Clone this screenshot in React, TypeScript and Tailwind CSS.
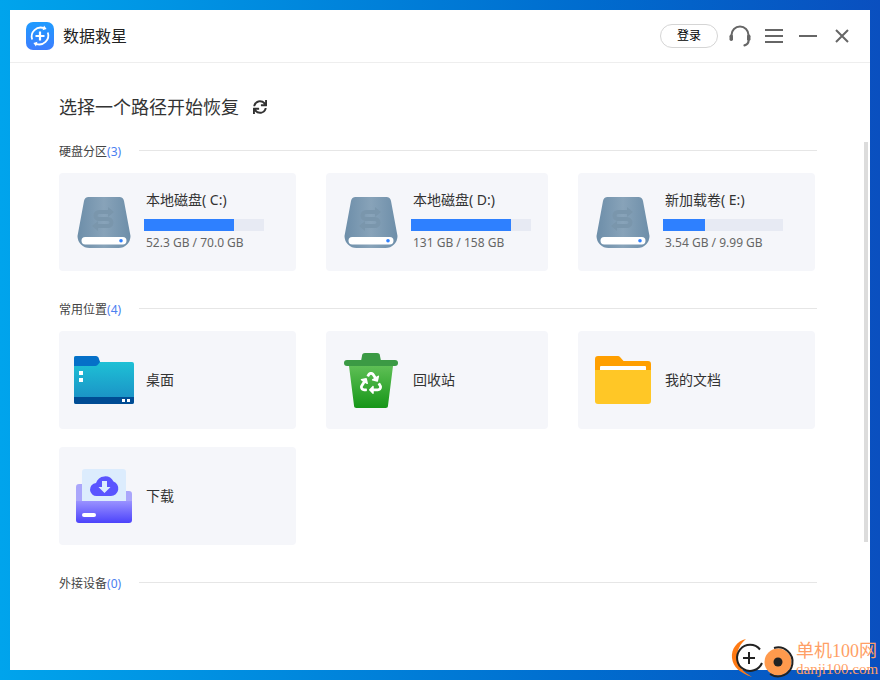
import React from "react";
import { FaRecycle, FaSync } from "react-icons/fa";

const cjk = { fontFamily: '"Noto Sans", "Noto Sans CJK SC", "Liberation Sans", sans-serif' };

function LogoIcon() {
  return (
    <svg width="28" height="28" viewBox="0 0 28 28">
      <defs>
        <linearGradient id="logo" x1="0" y1="0" x2="0" y2="1">
          <stop offset="0" stopColor="#1f9cff" />
          <stop offset="1" stopColor="#3d7dff" />
        </linearGradient>
      </defs>
      <rect width="28" height="28" rx="7" fill="url(#logo)" />
      <path d="M6.200 17.500A9 9 0 0 1 18 6.200" fill="none" stroke="#fff" strokeWidth="1.800" />
      <path d="M21.800 10.500A9 9 0 0 1 10 21.800" fill="none" stroke="#fff" strokeWidth="1.800" />
      <path d="M18 3.600l2.600 3.400-4 1.200z M10 24.400L7.400 21l4-1.200z" fill="#fff" />
      <path d="M14 9.500v9M9.500 14h9" stroke="#fff" strokeWidth="2.200" />
    </svg>
  );
}

function HeadsetIcon() {
  return (
    <svg width="24" height="24" viewBox="0 0 24 24" fill="none">
      <path d="M3.500 14V11a8.500 8.500 0 0 1 17 0v3" stroke="#666" strokeWidth="2" />
      <rect x="1.500" y="10.500" width="3.500" height="6.500" rx="1.700" fill="#666" />
      <rect x="19" y="10.500" width="3.500" height="6.500" rx="1.700" fill="#666" />
      <path d="M20.500 17c0 2.500-2 3.800-4 4.400" stroke="#666" strokeWidth="2.200" strokeLinecap="round" />
    </svg>
  );
}

function DiskIcon() {
  return (
    <svg width="54" height="52" viewBox="0 0 54 52">
      <defs>
        <linearGradient id="disk" x1="0" y1="0" x2="1" y2="0">
          <stop offset="0" stopColor="#6d8ea9" />
          <stop offset="0.5" stopColor="#88a3b9" />
          <stop offset="1" stopColor="#6d8ea9" />
        </linearGradient>
      </defs>
      <path d="M12 0h30a5 5 0 0 1 5 4l6.500 35a12 12 0 0 1-12 12H12.500a12 12 0 0 1-12-12L7 4a5 5 0 0 1 5-4z" fill="url(#disk)" />
      <rect x="4.500" y="40" width="45" height="7.500" rx="3.700" fill="#fff" />
      <circle cx="44" cy="43.700" r="1.800" fill="#2f80ff" />
      <path d="M33 15H22a3.500 3.500 0 0 0 0 7h9a3.500 3.500 0 0 1 0 7H19" fill="none" stroke="#7a96ac" strokeWidth="4" />
      <path d="M31 10l6 5-6 5z M21 24l-6 5 6 5z" fill="#7a96ac" />
    </svg>
  );
}

function DesktopIcon() {
  return (
    <svg width="60" height="48" viewBox="0 0 60 48">
      <defs>
        <linearGradient id="desk" x1="0" y1="0" x2="0" y2="1">
          <stop offset="0" stopColor="#1fc8d8" />
          <stop offset="1" stopColor="#1a8cc4" />
        </linearGradient>
      </defs>
      <path d="M2 0h20l4 6h32a2 2 0 0 1 2 2v38a2 2 0 0 1-2 2H2a2 2 0 0 1-2-2V2a2 2 0 0 1 2-2z" fill="url(#desk)" />
      <path d="M2 0h20a3 3 0 0 1 2.500 1.500L26 6 24 8.500a3 3 0 0 1-2.500 1.500H0V2a2 2 0 0 1 2-2z" fill="#0570c8" />
      <rect x="5" y="15" width="4" height="4" fill="#fff" />
      <rect x="5" y="22" width="4" height="4" fill="#fff" />
      <path d="M0 41h60v5a2 2 0 0 1-2 2H2a2 2 0 0 1-2-2z" fill="#004c94" />
      <rect x="48" y="43" width="3" height="3" fill="#fff" />
      <rect x="53" y="43" width="3" height="3" fill="#fff" />
    </svg>
  );
}

function RecycleIcon() {
  return (
    <svg width="54" height="55" viewBox="0 0 54 55">
      <defs>
        <linearGradient id="bin" x1="0" y1="0" x2="0" y2="1">
          <stop offset="0" stopColor="#5ebf55" />
          <stop offset="1" stopColor="#169618" />
        </linearGradient>
      </defs>
      <path d="M17 8l1-5a3 3 0 0 1 3-3h12a3 3 0 0 1 3 3l1 5z" fill="#3b9a44" />
      <rect x="0" y="7" width="54" height="6" rx="3" fill="#3b9a44" />
      <path d="M5 13h44l-5 39.500a2.500 2.500 0 0 1-2.500 2.500h-29a2.500 2.500 0 0 1-2.500-2.500z" fill="url(#bin)" />
      <FaRecycle x={16} y={19} size={22} color="#fff" />
    </svg>
  );
}

function DocumentsIcon() {
  return (
    <svg width="56" height="48" viewBox="0 0 56 48">
      <path d="M3 0h20a3 3 0 0 1 2 1l3.500 4H53a3 3 0 0 1 3 3v12H0V3a3 3 0 0 1 3-3z" fill="#ff9f00" />
      <rect x="5" y="10" width="46" height="8" rx="1" fill="#fff" />
      <path d="M0 14h56v31a3 3 0 0 1-3 3H3a3 3 0 0 1-3-3z" fill="#ffc726" />
    </svg>
  );
}

function DownloadIcon() {
  return (
    <svg width="56" height="54" viewBox="0 0 56 54">
      <defs>
        <linearGradient id="tray" x1="0" y1="0" x2="0" y2="1">
          <stop offset="0" stopColor="#9a92ff" />
          <stop offset="1" stopColor="#4c43fb" />
        </linearGradient>
      </defs>
      <path d="M3 15h3v17h44V22h3a3 3 0 0 1 3 3v10H0V18a3 3 0 0 1 3-3z" fill="#aaa6fb" />
      <path d="M0 32h56v19a3 3 0 0 1-3 3H3a3 3 0 0 1-3-3z" fill="url(#tray)" />
      <path d="M9 0h38a3 3 0 0 1 3 3v29H6V3a3 3 0 0 1 3-3z" fill="#dcecfd" />
      <path d="M22 27a6.500 6.500 0 0 1-1-13 9.500 9.500 0 0 1 17.500-1.500A7.500 7.500 0 0 1 36 27z" fill="#5a54ff" transform="translate(-1 0)" />
      <path d="M26 12h5v6h3.500l-6 6-6-6H26z" fill="#dcecfd" />
      <rect x="6" y="44" width="14" height="4" rx="2" fill="#fff" />
    </svg>
  );
}

function Section({ title, count }: { title: string; count: number }) {
  return (
    <div className="flex items-center h-[18px]">
      <span className="text-[12px] leading-[18px] w-[80px] text-[#444] mt-[2px]">
        {title}
        <span className="text-[#4a80f0]">({count})</span>
      </span>
      <div className="h-px w-[678px] bg-[#e6e6e6] mb-[2px]" />
    </div>
  );
}

function DriveCard({ name, used, size, pct }: { name: string; used: string; size: string; pct: number }) {
  return (
    <div className="h-[98px] rounded-[4px] bg-[#f5f6fa] flex items-center pl-[19px]">
      <div className="-ml-px mt-[2px]">
        <DiskIcon />
      </div>
      <div className="ml-[13px] flex flex-col mb-[3px]">
        <span className="text-[14px] leading-[18px] pl-[2px] text-[#333]">{name}</span>
        <div className="w-[120px] h-[12px] bg-[#e7eaf3] mt-[10px]">
          <div className="h-full bg-[#2e80ff]" style={{ width: `${pct}%` }} />
        </div>
        <span className="text-[12px] leading-[16px] pl-[2px] mt-[4px] text-[#666]">
          {used} / {size}
        </span>
      </div>
    </div>
  );
}

function PlaceCard({ name, pr, icon }: { name: string; pr: string; icon: React.ReactNode }) {
  return (
    <div className="h-[98px] rounded-[4px] bg-[#f5f6fa] flex items-center">
      <div className={`w-[87px] flex justify-end shrink-0 ${pr}`}>{icon}</div>
      <span className="text-[14px] text-[#333] mb-[2px]">{name}</span>
    </div>
  );
}

export default function App() {
  return (
    <div
      className="relative w-[880px] h-[680px] overflow-hidden p-[10px] bg-gradient-to-r from-[#00a4ec] to-[#0a4fbf]"
      style={cjk}
    >
      <div className="relative w-[860px] h-[660px] bg-white flex flex-col">
        <header className="h-[53px] shrink-0 border-b border-[#eeeeee] flex items-center pl-[16px] pr-[20px]">
          <LogoIcon />
          <span className="ml-[9px] text-[16px] text-[#222]">数据救星</span>
          <div className="ml-auto flex items-center">
            <button className="w-[58px] h-[24px] rounded-full border border-[#d5d5d5] text-[12px] text-black flex items-center justify-center">
              登录
            </button>
            <div className="ml-[10px]">
              <HeadsetIcon />
            </div>
            <div className="ml-[13px] w-[18px] flex flex-col gap-[4px]">
              <div className="h-[2px] bg-[#666]" />
              <div className="h-[2px] bg-[#666]" />
              <div className="h-[2px] bg-[#666]" />
            </div>
            <div className="ml-[16px] w-[18px] h-[2px] bg-[#666]" />
            <svg className="ml-[17px]" width="16" height="16" viewBox="0 0 16 16">
              <path d="M2 2l12 12M14 2L2 14" stroke="#666" strokeWidth="2" />
            </svg>
          </div>
        </header>

        <main className="flex-1 pl-[49px] pt-[31px]">
          <div className="flex items-center h-[26px]">
            <h1 className="text-[18px] leading-[24px] font-normal text-[#333]">选择一个路径开始恢复</h1>
            <FaSync className="ml-[14px] text-[#333] mb-[1px]" size={14} />
          </div>

          <div className="mt-[22px]">
            <Section title="硬盘分区" count={3} />
          </div>
          <div className="mt-[13px] grid grid-cols-[237px_222px_237px] gap-x-[30px]">
            <DriveCard name="本地磁盘( C:)" used="52.3 GB" size="70.0 GB" pct={75} />
            <DriveCard name="本地磁盘( D:)" used="131 GB" size="158 GB" pct={83} />
            <DriveCard name="新加载卷( E:)" used="3.54 GB" size="9.99 GB" pct={35} />
          </div>

          <div className="mt-[29px]">
            <Section title="常用位置" count={4} />
          </div>
          <div className="mt-[13px] grid grid-cols-[237px_222px_237px] gap-x-[30px] gap-y-[18px]">
            <PlaceCard name="桌面" pr="pr-[12px]" icon={<DesktopIcon />} />
            <PlaceCard name="回收站" pr="pr-[15px]" icon={<RecycleIcon />} />
            <PlaceCard name="我的文档" pr="pr-[14px]" icon={<DocumentsIcon />} />
            <PlaceCard name="下载" pr="pr-[14px]" icon={<DownloadIcon />} />
          </div>

          <div className="mt-[29px]">
            <Section title="外接设备" count={0} />
          </div>
        </main>

        <div className="absolute right-[2px] top-[132px] w-[4px] h-[400px] bg-[#dcdcdc]" />
      </div>

      <div className="absolute left-[730px] top-[636px] flex items-start">
        <svg width="66" height="44" viewBox="0 0 66 44">
          <path d="M16 3C7 5 1 13 2 22c1 9 8 15 20 19-8-5-15-10-15-19C7 14 10 8 16 3z" fill="#ff7a14" />
          <circle cx="20" cy="22" r="13" fill="#fff" />
          <path d="M30 13.500A13 13 0 1 0 32 27" fill="none" stroke="#222" strokeWidth="2" />
          <path d="M19 16v12M13 22h12" stroke="#222" strokeWidth="2" />
          <circle cx="48" cy="26" r="13.500" fill="#ff9a4d" />
          <path d="M44 12A14.500 14.500 0 1 1 40 38" fill="none" stroke="#222" strokeWidth="2" />
          <circle cx="48" cy="26" r="4.500" fill="#222" />
        </svg>
        <div
          className="flex flex-col mt-[5px] text-[#ff9f66]"
          style={{ fontFamily: '"Liberation Serif", "Noto Sans CJK SC", serif' }}
        >
          <span className="text-[18px] leading-[20px]">单机100网</span>
          <span className="text-[15px] leading-[17px]">danji100.com</span>
        </div>
      </div>
    </div>
  );
}
